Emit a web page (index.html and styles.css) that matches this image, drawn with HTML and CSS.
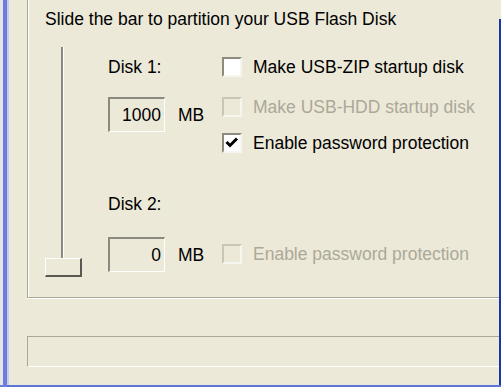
FILE: index.html
```html
<!DOCTYPE html>
<html>
<head>
<meta charset="utf-8">
<link rel="stylesheet" href="styles.css">
</head>
<body>
<div class="window">
  <div class="main">
    <div class="frame-left"></div>
    <div class="client">
      <div class="group">
        <div class="intro">Slide the bar to partition your USB Flash Disk</div>
        <div class="body">
          <div class="slider">
            <div class="track"></div>
            <div class="thumb"></div>
          </div>
          <div class="form">
            <div class="row row-disk1">
              <div class="cell-left"><span class="label">Disk 1:</span></div>
              <div class="check"><span class="box"></span><span class="label">Make USB-ZIP startup disk</span></div>
            </div>
            <div class="row row-size1">
              <div class="cell-left"><span class="field">1000</span><span class="unit">MB</span></div>
              <div class="check disabled"><span class="box"></span><span class="label">Make USB-HDD startup disk</span></div>
            </div>
            <div class="row row-pw1">
              <div class="cell-left"></div>
              <div class="check"><span class="box"><svg width="16" height="16" viewBox="0 0 16 16"><polyline points="2.5,7 6,10.5 13,3.5" fill="none" stroke="#000" stroke-width="3"/></svg></span><span class="label">Enable password protection</span></div>
            </div>
            <div class="row row-disk2">
              <div class="cell-left"><span class="label">Disk 2:</span></div>
            </div>
            <div class="row row-size2">
              <div class="cell-left"><span class="field">0</span><span class="unit">MB</span></div>
              <div class="check disabled check-low"><span class="box"></span><span class="label">Enable password protection</span></div>
            </div>
          </div>
        </div>
      </div>
      <div class="status"></div>
    </div>
    <div class="frame-right"></div>
  </div>
  <div class="frame-bottom"></div>
</div>
</body>
</html>
```
FILE: styles.css
```css
html, body {
  margin: 0;
  padding: 0;
  background: #ece9d8;
}
body {
  width: 501px;
  height: 387px;
  overflow: hidden;
  font-family: "Liberation Sans", Arial, sans-serif;
  font-size: 17.5px;
  color: #000;
}
.window {
  display: flex;
  flex-direction: column;
  height: 387px;
}
.main {
  display: flex;
  height: 385px;
}
.frame-left {
  width: 9px;
  flex: none;
  background: linear-gradient(to right, #e6e6e6 0 3px, #6b7ede 3px 7px, #c2ccee 7px 9px);
}
.frame-right {
  width: 2px;
  flex: none;
  margin-top: 19px;
  background: #1836a8;
}
.frame-bottom {
  height: 2px;
  background: linear-gradient(to right, #6b7ede 0 7px, #5d72da 7px);
}
.client {
  flex: 1;
  display: flex;
  flex-direction: column;
  padding-left: 18px;
}
.group {
  height: 298px;
  box-sizing: border-box;
  border-left: 1px solid #aaa796;
  border-bottom: 1px solid #aaa796;
  box-shadow: inset 1px 0 0 #fff, 0 1px 0 #fff;
}
.intro {
  margin-top: 9px;
  padding-left: 17px;
  line-height: 20px;
}
.body {
  display: flex;
}
.slider {
  width: 37px;
  margin-left: 17px;
  padding-top: 18px;
  display: flex;
  flex-direction: column;
}
.track {
  margin-left: 16px;
  width: 2px;
  height: 211px;
  background: #8c8a7e;
  border-right: 1px solid #fff;
}
.thumb {
  box-sizing: border-box;
  width: 37px;
  height: 19px;
  background: #ece9d8;
  border-top: 1px solid #fff;
  border-left: 1px solid #fff;
  border-right: 2px solid #5a5850;
  border-bottom: 2px solid #5a5850;
}
.form {
  margin-left: 26px;
  padding-top: 28px;
}
.row {
  display: flex;
  align-items: flex-start;
}
.cell-left {
  width: 114px;
  display: flex;
  align-items: center;
}
.label {
  line-height: 20px;
  white-space: nowrap;
}
.row-size1 {
  margin-top: 20px;
  height: 36px;
}
.row-size1 .cell-left, .row-size2 .cell-left {
  height: 35px;
}
.row-disk2 {
  margin-top: 41px;
  height: 20px;
}
.row-size2 {
  margin-top: 23px;
}
.field {
  box-sizing: border-box;
  width: 57px;
  height: 35px;
  line-height: 32px;
  text-align: right;
  padding-right: 3px;
  border-top: 2px solid #8c8a7e;
  border-left: 2px solid #8c8a7e;
  border-right: 1px solid #fff;
  border-bottom: 1px solid #fff;
}
.unit {
  margin-left: 13px;
  line-height: 20px;
}
.check {
  display: flex;
  align-items: center;
  gap: 11px;
}
.check-low {
  margin-top: 7px;
}
.box {
  box-sizing: border-box;
  width: 20px;
  height: 20px;
  flex: none;
  border: 2px solid;
  border-color: #8d8b80 #f6f5f0 #f6f5f0 #8d8b80;
  background: #fff;
  display: flex;
}
.disabled .box {
  border-color: #c9c6b6 #f6f5f0 #f6f5f0 #c9c6b6;
  background: #ece9d8;
}
.disabled .label {
  color: #aca899;
}
.status {
  margin-top: 38px;
  height: 29px;
  border-top: 1px solid #aaa796;
  border-left: 1px solid #aaa796;
  border-bottom: 1px solid #fff;
}
```
